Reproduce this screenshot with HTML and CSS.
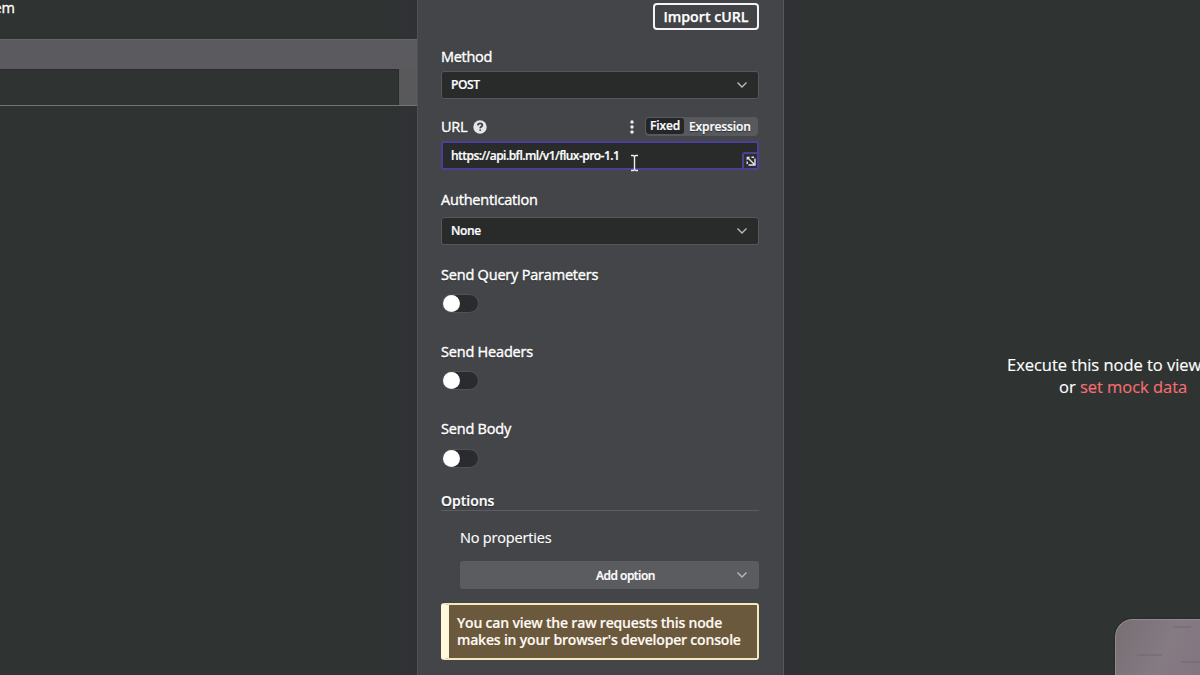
FILE: index.html
```html
<!DOCTYPE html>
<html lang="en">
<head>
<meta charset="utf-8">
<title>HTTP Request</title>
<link rel="stylesheet" href="styles.css">
</head>
<body>
<div class="app">
  <section class="input-pane">
    <div class="item-count"><span>1 item</span></div>
    <div class="table-head"></div>
    <div class="table-row"><div class="table-cell"></div></div>
  </section>

  <main class="settings">
    <div class="import-row"><button class="import"><span>Import cURL</span></button></div>

    <div class="label label-method"><span>Method</span></div>
    <div class="select"><span>POST</span>
      <svg class="chevron" viewBox="0 0 12 8"><path d="M1.500 1.500 6 6l4.500-4.500"/></svg>
    </div>

    <div class="label label-url">
      <span>URL</span>
      <svg class="help" viewBox="0 0 14 14"><circle cx="7" cy="7" r="6.700"/><path d="M4.900 5.400C5 4 6 3.400 7.100 3.400c1.200 0 2.200.7 2.200 1.800 0 1.500-2.100 1.600-2.100 3"/><rect x="6.300" y="9.300" width="1.800" height="1.800" rx=".8"/></svg>
      <svg class="dots" viewBox="0 0 4 14"><circle cx="2" cy="2" r="1.700"/><circle cx="2" cy="7" r="1.700"/><circle cx="2" cy="12" r="1.700"/></svg>
      <div class="mode"><span class="fixed">Fixed</span><span>Expression</span></div>
    </div>
    <div class="url-input"><span class="url-text">https://api.bfl.ml/v1/flux-pro-1.1</span>
      <div class="expand"><svg viewBox="0 0 10 10"><path d="M2 2l6 6M9 2.500V9H2.500"/><path class="head" d="M.6.800h3.600L.6 4.400z"/><path d="M5.500 1.200H8M1.200 5.500V8"/></svg></div>
      <svg class="cursor" viewBox="0 0 9 18"><path d="M1 1.500h2.300l1.200 1 1.200-1H8M4.500 2.500v13M1 16.500h2.300l1.200-1 1.200 1H8"/></svg>
    </div>

    <div class="label label-auth"><span>Authentication</span></div>
    <div class="select"><span>None</span>
      <svg class="chevron" viewBox="0 0 12 8"><path d="M1.500 1.500 6 6l4.500-4.500"/></svg>
    </div>

    <div class="label label-query"><span>Send Query Parameters</span></div>
    <div class="toggle toggle-query"></div>
    <div class="label label-headers"><span>Send Headers</span></div>
    <div class="toggle toggle-headers"></div>
    <div class="label label-body"><span>Send Body</span></div>
    <div class="toggle"></div>

    <div class="options-title"><span>Options</span></div>
    <div class="options">
      <div class="no-props"><span>No properties</span></div>
      <div class="add"><span>Add option</span>
        <svg class="chevron" viewBox="0 0 12 8"><path d="M1.500 1.500 6 6l4.500-4.500"/></svg>
      </div>
    </div>
    <div class="notice"><span>You can view the raw requests this node</span><span>makes in your browser's developer console</span></div>
  </main>

  <section class="output-pane">
    <div class="hint"><span>Execute this node to view data</span></div>
    <div class="hint hint-second"><span>or <a>set mock data</a></span></div>
    <div class="camera"><svg viewBox="0 0 85 56"><path d="M57 8h18M21 36h25M65 43h20"/></svg></div>
  </section>
</div>
</body>
</html>
```

FILE: styles.css
```css
* { box-sizing: border-box; }
body { margin: 0; overflow: hidden; background: #2f3332; color: #fff; font-family: "Open Sans", "Noto Sans", sans-serif; }
.app { display: flex; width: 1200px; height: 675px; overflow: hidden; }
span { white-space: nowrap; }
svg { display: block; flex: none; }

.input-pane { width: 417px; flex: none; background: linear-gradient(90deg, #2f3332 390px, #303137 417px); }
.item-count { height: 39px; width: 15px; display: flex; justify-content: flex-end; font-size: 14.500px; -webkit-text-stroke: .3px #fff; line-height: 15px; }
.table-head { height: 30px; background: #5b5b5f; border-top: 1px solid #66666a; }
.table-row { height: 37px; display: flex; background: #59595c; border-bottom: 1px solid #727573; }
.table-cell { width: 399px; background: #2f3331; border-top: 1px solid #292c2a; border-right: 1px solid #292c2a; }

.settings { width: 367px; flex: none; display: flex; flex-direction: column; padding: 3px 24px 0 23px; background: #434548; border-left: 1px solid #505255; border-right: 1px solid #55575b; }
.import-row { display: flex; justify-content: flex-end; height: 27px; }
.import { width: 106px; height: 27px; padding: 0; display: flex; align-items: center; justify-content: center; color: #fff; background: #414346; border: 2px solid #f4f4f6; border-radius: 4px; font: 600 14.200px/18px "Open Sans", sans-serif; -webkit-text-stroke: .25px #fff; }
.label { display: flex; align-items: center; height: 20px; font-size: 14.500px; letter-spacing: -.2px; line-height: 20px; flex: none; text-shadow: 0 1px 1px #292b2e; -webkit-text-stroke: .4px #fff; }
.label-method { margin-top: 17px; letter-spacing: -.3px; }
.label-url { margin-top: 18px; }
.label-auth { margin-top: 20px; }
.label-query { margin-top: 20px; }
.label-headers { margin-top: 29px; }
.label-body { margin-top: 29px; }

.select, .url-input { display: flex; align-items: center; height: 28px; flex: none; background: #292b2a; border: 1px solid #55575a; border-radius: 3px; padding: 0 10px 0 9px; font-size: 12px; font-weight: 600; letter-spacing: -.35px; line-height: 16px; -webkit-text-stroke: .2px #fff; }
.select { margin-top: 4px; }
.label-auth + .select { margin-top: 7px; }
.chevron { width: 12px; height: 8px; margin-left: auto; fill: none; stroke: #b9babb; stroke-width: 1.400; }
.help { width: 14px; height: 14px; margin: -1px 0 0 5px; fill: #e5e6ea; }
.help path { fill: none; stroke: #3f4145; stroke-width: 1.800; }
.help rect { fill: #3f4145; }
.dots { width: 4px; height: 14px; margin-left: auto; fill: #ececee; }
.mode { display: flex; align-items: center; width: 113px; height: 19px; margin: -2px 1px 0 11px; background: #57595d; border-radius: 4px; font-size: 12px; font-weight: 600; letter-spacing: -.1px; line-height: 17px; padding: 0 1px; -webkit-text-stroke: .2px #fff; }
.fixed { display: flex; justify-content: center; width: 38px; height: 16px; line-height: 16px; margin-right: 5px; background: #242629; border-radius: 3px; }
.url-input { position: relative; margin-top: 4px; border: 2px solid #4b4099; padding: 0 8px; height: 29px; letter-spacing: -.54px; font-variant-ligatures: none; }
.url-text { margin-top: 1px; }
.expand { position: absolute; right: -2px; bottom: -2px; width: 17px; height: 18px; display: flex; align-items: center; justify-content: center; background: #2b2d2f; border: 2px solid #4b4099; border-radius: 3px 0 3px 0; }
.expand svg { width: 10px; height: 10px; fill: none; stroke: #e6e6ea; stroke-width: 1.400; }
.expand .head { fill: #e6e6ea; stroke: none; }
.cursor { position: absolute; left: 187px; top: 11px; width: 9px; height: 18px; fill: none; stroke: #ececec; stroke-width: 1.400; }

.toggle { width: 37px; height: 19px; flex: none; margin: 10px 0 0 1px; background: #292b2e; border: 1px solid #505256; border-radius: 10px; }
.toggle-query, .toggle-headers { margin-top: 9px; }
.toggle::before { content: ""; display: block; width: 17px; height: 17px; background: #fff; border-radius: 50%; }

.options-title { height: 20px; flex: none; margin-top: 23px; border-bottom: 1px solid #5c5d61; font-size: 14px; font-weight: 600; line-height: 20px; text-shadow: 0 1px 1px #292b2e; -webkit-text-stroke: .2px #fff; }
.options { display: flex; flex-direction: column; padding-left: 19px; flex: none; }
.no-props { height: 20px; margin-top: 17px; font-size: 14.500px; letter-spacing: -.18px; line-height: 20px; -webkit-text-stroke: .15px #fff; }
.add { position: relative; display: flex; align-items: center; justify-content: center; height: 28px; margin-top: 13px; padding-left: 32px; background: #5b5c60; border-radius: 3px; font-size: 12px; font-weight: 600; letter-spacing: -.5px; -webkit-text-stroke: .2px #fff; }
.add .chevron { position: absolute; right: 11px; top: 10px; }
.notice { display: flex; flex-direction: column; height: 57px; flex: none; margin-top: 14px; padding: 9px 0 0 8px; background: #6b593e; border: 2px solid #f4e9bd; border-left: 8px solid #fff8da; border-radius: 3px; font-size: 14px; font-weight: 600; letter-spacing: -.19px; line-height: 17px; color: #fff9f2; -webkit-text-stroke: .15px #fff9f2; }
.notice span { align-self: flex-start; }

.output-pane { width: 416px; flex: none; position: relative; padding-top: 354px; background: linear-gradient(90deg, #303136, #2f3332 24px); overflow: hidden; }
.hint { height: 22px; padding-left: 223px; font-size: 16.500px; line-height: 22px; letter-spacing: -.03px; -webkit-text-stroke: .15px; }
.hint-second { padding-left: 275px; }
.hint a { color: #f66f73; }
.camera { position: absolute; left: 331px; top: 619px; width: 90px; height: 60px; border-radius: 18px 0 0 0; border-top: 1px solid #928a91; border-left: 1px solid #928a91; background: linear-gradient(115deg, #776f74, #857b83 55%, #82747f); box-shadow: 0 0 2px #191b1b; }
.camera svg { width: 85px; height: 56px; margin-top: -1px; fill: none; stroke: #6b6067; stroke-width: 1; opacity: .7; }
```
